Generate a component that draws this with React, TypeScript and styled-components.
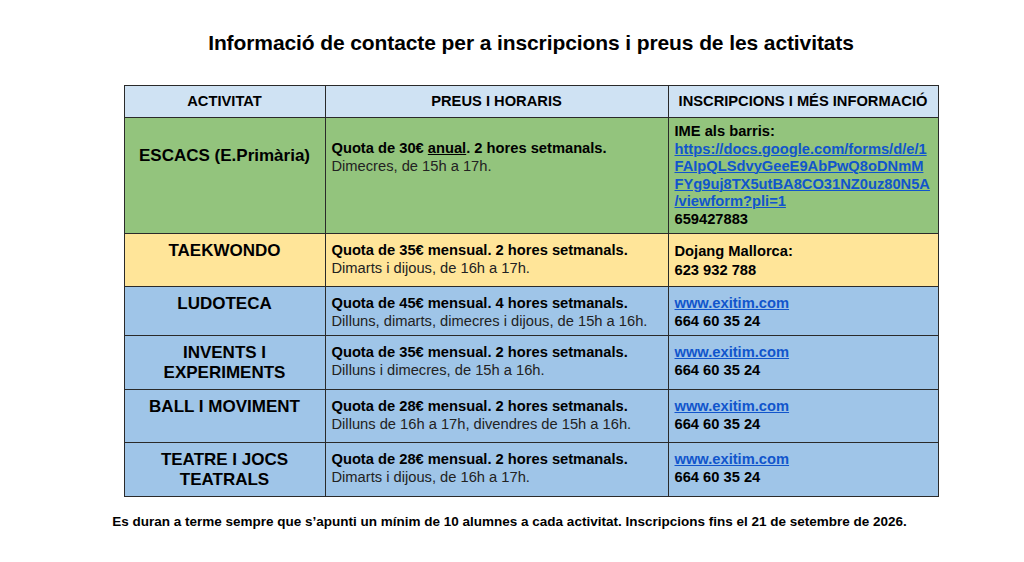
import * as React from 'react';
import styled, { createGlobalStyle } from 'styled-components';

const GlobalStyle = createGlobalStyle`
    body {
        margin: 0;
        background: #fff;
        font-family: "Liberation Sans", Arial, sans-serif;
        color: #000;
    }
`;

const Page = styled.div`
    display: flex;
    flex-direction: column;
    align-items: center;
    box-sizing: border-box;
    width: 1024px;
    height: 562px;
    padding-left: 38px;
`;

const Title = styled.h1`
    margin: 31px 0 0;
    font-size: 21px;
    line-height: 24px;
    font-weight: bold;
    letter-spacing: -0.1px;
`;

const Table = styled.table`
    margin-top: 30px;
    border-collapse: collapse;
    table-layout: fixed;
    width: 814px;
    font-size: 14.7px;
    line-height: 17.5px;
    td, th {
        border: 1.5px solid #2a2a2a;
    }
`;

const HeadCell = styled.th<{ $w: number }>`
    width: ${p => p.$w}px;
    height: 32px;
    padding: 0 6px;
    background: #cfe2f3;
    font-weight: bold;
    text-align: center;
    vertical-align: middle;
    box-sizing: border-box;
`;

const Row = styled.tr<{ $h: number; $bg: string }>`
    height: ${p => p.$h}px;
    background: ${p => p.$bg};
`;

const NameCell = styled.td<{ $top?: number }>`
    padding: ${p => p.$top ?? 7}px 6px 0;
    font-size: 17px;
    line-height: 20px;
    font-weight: bold;
    text-align: center;
    vertical-align: top;
`;

const Cell = styled.td<{ $top?: number; $lh?: number }>`
    padding: ${p => p.$top ?? 8}px 6px 0;
    line-height: ${p => p.$lh ?? 17.5}px;
    vertical-align: top;
`;

const Strong = styled.div`
    font-weight: bold;
    u {
        text-decoration-thickness: 1px;
    }
`;

const Plain = styled.div`
    color: #222;
`;

const Link = styled.a`
    display: block;
    color: #1155cc;
    font-weight: bold;
    text-decoration: underline;
    text-decoration-thickness: 1px;
`;

const Footer = styled.p`
    margin: 17px 43px 0 0;
    font-size: 13.5px;
    line-height: 16px;
    font-weight: bold;
`;

const BLUE = '#9fc5e8';

const rows = [
    { name: ['TAEKWONDO'], h: 53, bg: '#ffe599', quota: 'Quota de 35€ mensual. 2 hores setmanals.', when: 'Dimarts i dijous, de 16h a 17h.', info: null },
    { name: ['LUDOTECA'], h: 49, bg: BLUE, quota: 'Quota de 45€ mensual. 4 hores setmanals.', when: 'Dilluns, dimarts, dimecres i dijous, de 15h a 16h.', info: 'exitim' },
    { name: ['INVENTS I', 'EXPERIMENTS'], h: 54, bg: BLUE, quota: 'Quota de 35€ mensual. 2 hores setmanals.', when: 'Dilluns i dimecres, de 15h a 16h.', info: 'exitim' },
    { name: ['BALL I MOVIMENT'], h: 53, bg: BLUE, quota: 'Quota de 28€ mensual. 2 hores setmanals.', when: 'Dilluns de 16h a 17h, divendres de 15h a 16h.', info: 'exitim' },
    { name: ['TEATRE I JOCS', 'TEATRALS'], h: 54, bg: BLUE, quota: 'Quota de 28€ mensual. 2 hores setmanals.', when: 'Dimarts i dijous, de 16h a 17h.', info: 'exitim' },
];

export default function App() {
    return (
        <Page>
            <GlobalStyle />
            <Title>Informació de contacte per a inscripcions i preus de les activitats</Title>
            <Table>
                <thead>
                    <tr>
                        <HeadCell $w={201}>ACTIVITAT</HeadCell>
                        <HeadCell $w={343}>PREUS I HORARIS</HeadCell>
                        <HeadCell $w={270}>INSCRIPCIONS I MÉS INFORMACIÓ</HeadCell>
                    </tr>
                </thead>
                <tbody>
                    <Row $h={116} $bg="#93c47d">
                        <NameCell $top={28}>ESCACS (E.Primària)</NameCell>
                        <Cell $top={22}>
                            <Strong>Quota de 30€ <u>anual</u>. 2 hores setmanals.</Strong>
                            <Plain>Dimecres, de 15h a 17h.</Plain>
                        </Cell>
                        <Cell $top={5}>
                            <Strong>IME als barris:</Strong>
                            <Link href="#">
                                https://docs.google.com/forms/d/e/1<br />
                                FAIpQLSdvyGeeE9AbPwQ8oDNmM<br />
                                FYg9uj8TX5utBA8CO31NZ0uz80N5A<br />
                                /viewform?pli=1
                            </Link>
                            <Strong>659427883</Strong>
                        </Cell>
                    </Row>
                    {rows.map(r => (
                        <Row key={r.name.join(' ')} $h={r.h} $bg={r.bg}>
                            <NameCell>
                                {r.name.map(n => <div key={n}>{n}</div>)}
                            </NameCell>
                            <Cell>
                                <Strong>{r.quota}</Strong>
                                <Plain>{r.when}</Plain>
                            </Cell>
                            {r.info ? (
                                <Cell>
                                    <Link href="#">www.exitim.com</Link>
                                    <Strong>664 60 35 24</Strong>
                                </Cell>
                            ) : (
                                <Cell $lh={19}>
                                    <Strong>Dojang Mallorca:</Strong>
                                    <Strong>623 932 788</Strong>
                                </Cell>
                            )}
                        </Row>
                    ))}
                </tbody>
            </Table>
            <Footer>Es duran a terme sempre que s’apunti un mínim de 10 alumnes a cada activitat. Inscripcions fins el 21 de setembre de 2026.</Footer>
        </Page>
    );
}
